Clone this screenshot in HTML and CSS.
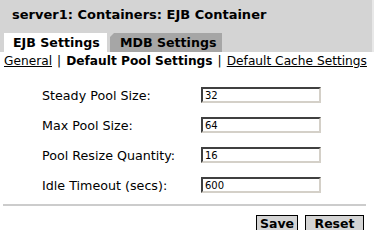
FILE: index.html
```html
<!DOCTYPE html>
<html>
<head>
<meta charset="utf-8">
<link rel="stylesheet" href="styles.css">
</head>
<body>
<div class="page">
  <div class="header">
    <div class="title">server1: Containers: EJB Container</div>
    <div class="tabs">
      <div class="tab tab-active">EJB Settings</div>
      <div class="tab tab-inactive">MDB Settings</div>
    </div>
  </div>
  <div class="subnav">
    <a class="link" href="#">General</a><span class="sep">|</span><span class="current">Default Pool Settings</span><span class="sep">|</span><a class="link" href="#">Default Cache Settings</a>
  </div>
  <div class="form">
    <div class="row"><span class="label">Steady Pool Size:</span><input class="field" type="text" value="32"></div>
    <div class="row"><span class="label">Max Pool Size:</span><input class="field" type="text" value="64"></div>
    <div class="row"><span class="label">Pool Resize Quantity:</span><input class="field" type="text" value="16"></div>
    <div class="row"><span class="label">Idle Timeout (secs):</span><input class="field" type="text" value="600"></div>
  </div>
  <div class="divider"></div>
  <div class="buttons">
    <button class="btn btn-save">Save</button>
    <button class="btn btn-reset">Reset</button>
  </div>
</div>
</body>
</html>
```

FILE: styles.css
```css
html, body {
  margin: 0;
  padding: 0;
  background: #ffffff;
}
body {
  font-family: "DejaVu Sans", Verdana, sans-serif;
  color: #000;
  width: 374px;
  height: 230px;
  overflow: hidden;
}
.page {
  display: flex;
  flex-direction: column;
}
.header {
  background: #d4d4d4;
  height: 52px;
  width: 372px;
  display: flex;
  flex-direction: column;
  border-right: 2px solid #e8e8e8;
}
.title {
  font-size: 13px;
  font-weight: bold;
  line-height: 20px;
  padding: 5px 0 0 12px;
  height: 21px;
}
.tabs {
  display: flex;
  margin-top: 7px;
  height: 19px;
  padding-left: 4px;
}
.tab {
  font-size: 12.6px;
  font-weight: bold;
  line-height: 19px;
  height: 19px;
}
.tab-active {
  background: #ffffff;
  width: 103px;
  padding-left: 9px;
  box-sizing: border-box;
}
.tab-inactive {
  background: #a6a6a6;
  width: 112px;
  margin-left: 3px;
  padding-left: 10px;
  box-sizing: border-box;
  clip-path: polygon(4px 0, 100% 0, 100% 100%, 0 100%, 0 4px);
}
.subnav {
  font-size: 12.2px;
  line-height: 18px;
  height: 18px;
  padding-left: 4px;
  white-space: nowrap;
}
.link {
  color: #000;
  text-decoration: underline;
}
.current {
  font-weight: bold;
}
.sep {
  padding: 0 5px;
}
.form {
  display: flex;
  flex-direction: column;
  margin-top: 10px;
}
.row {
  display: flex;
  align-items: center;
  height: 30px;
}
.label {
  font-size: 12.7px;
  width: 159px;
  padding-left: 42px;
}
.field {
  width: 120px;
  height: 16px;
  box-sizing: border-box;
  margin: 0;
  padding: 0 0 0 2px;
  border-top: 2px solid #404040;
  border-left: 2px solid #404040;
  border-right: 2px solid #d4d0c8;
  border-bottom: 2px solid #d4d0c8;
  font-family: "DejaVu Sans", Verdana, sans-serif;
  font-size: 10px;
  color: #000;
  background: #fff;
  outline: none;
}
.divider {
  height: 2px;
  width: 363px;
  margin: 4px 0 0 3px;
  background: #cccccc;
}
.buttons {
  display: flex;
  justify-content: flex-end;
  gap: 7px;
  padding-right: 10px;
  margin-top: 9px;
}
.btn {
  font-family: "DejaVu Sans", Verdana, sans-serif;
  font-size: 12.5px;
  font-weight: bold;
  background: #d4d4d4;
  border: 1px solid #000;
  height: 18px;
  padding: 0;
  line-height: 16px;
  color: #000;
}
.btn-save {
  width: 42px;
}
.btn-reset {
  width: 59px;
}
```
